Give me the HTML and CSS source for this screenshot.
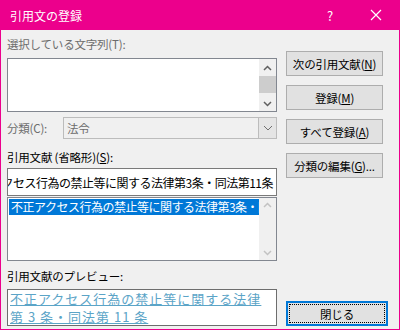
FILE: index.html
```html
<!DOCTYPE html>
<html lang="ja">
<head>
    <meta charset="UTF-8">
    <title>引用文の登録</title>
    <link rel="stylesheet" href="styles.css">
</head>
<body>
    <div class="window">
        <div class="titlebar">
            <span class="title">引用文の登録</span>
            <span class="help">?</span>
            <span class="close">
                <svg width="12" height="12" viewBox="0 0 12 12"><path d="M1 1L11 11M11 1L1 11" stroke="#fff" stroke-width="1.2"/></svg>
            </span>
        </div>

        <div class="content">
            <div class="left">
                <div class="label disabled">選択している文字列(T):</div>
                <div class="textbox">
                    <div class="text-area"></div>
                    <div class="vscroll">
                        <svg width="17" height="14" viewBox="0 0 17 14"><path d="M5 9L8.5 5.5L12 9" fill="none" stroke="#606060" stroke-width="1.5"/></svg>
                        <div class="thumb"></div>
                        <div class="spacer"></div>
                        <svg width="17" height="14" viewBox="0 0 17 14"><path d="M5 5L8.5 8.5L12 5" fill="none" stroke="#606060" stroke-width="1.5"/></svg>
                    </div>
                </div>

                <div class="combo-row">
                    <span class="label disabled">分類(C):</span>
                    <div class="combo">
                        <span class="combo-text">法令</span>
                        <span class="combo-btn">
                            <svg width="10" height="6" viewBox="0 0 10 6"><path d="M1 1L5 5L9 1" fill="none" stroke="#707070" stroke-width="1"/></svg>
                        </span>
                    </div>
                </div>

                <div class="label short-label">引用文献 (省略形)(<u>S</u>):</div>
                <div class="input">
                    <span>不正アクセス行為の禁止等に関する法律第3条・同法第11条</span>
                </div>
                <div class="listbox">
                    <div class="list-items">
                        <div class="item selected">不正アクセス行為の禁止等に関する法律第3条・同法第11条</div>
                    </div>
                    <div class="vscroll">
                        <svg width="17" height="14" viewBox="0 0 17 14"><path d="M5 9L8.5 5.5L12 9" fill="none" stroke="#c2c2c2" stroke-width="1.5"/></svg>
                        <div class="spacer"></div>
                        <svg width="17" height="14" viewBox="0 0 17 14"><path d="M5 5L8.5 8.5L12 5" fill="none" stroke="#c2c2c2" stroke-width="1.5"/></svg>
                    </div>
                </div>

                <div class="label preview-label">引用文献のプレビュー:</div>
                <div class="preview">
                    <a href="#">不正アクセス行為の禁止等に関する法律<br> 第 3 条・同法第 11 条</a>
                </div>
            </div>

            <div class="right">
                <button class="btn">次の引用文献(<u>N</u>)</button>
                <button class="btn">登録(<u>M</u>)</button>
                <button class="btn">すべて登録(<u>A</u>)</button>
                <button class="btn">分類の編集(<u>G</u>)...</button>
                <button class="btn default"><span class="focus">閉じる</span></button>
            </div>
        </div>
    </div>
</body>
</html>
```

FILE: styles.css
```css
body {
    margin: 0;
    font-family: "Noto Sans CJK JP", "Noto Sans", sans-serif;
    font-size: 11.5px;
    letter-spacing: -0.2px;
    color: #000;
}
.window {
    width: 400px;
    height: 330px;
    box-sizing: border-box;
    background-color: #f0f0f0;
    border: 1px solid #ec008c;
    border-top: none;
    display: flex;
    flex-direction: column;
}
.titlebar {
    height: 30px;
    background-color: #ec008c;
    color: #fff;
    display: flex;
    align-items: center;
    margin: 0 -1px;
    padding-left: 10px;
    flex-shrink: 0;
}
.title {
    flex: 1;
    font-size: 12px;
    letter-spacing: 0;
}
.help {
    width: 46px;
    text-align: center;
    font-size: 13px;
}
.close {
    width: 46px;
    display: flex;
    justify-content: center;
    margin-right: 1px;
}
.content {
    flex: 1;
    display: flex;
    padding: 6px 0 9px 6px;
}
.left {
    width: 270px;
    display: flex;
    flex-direction: column;
}
.label {
    height: 16px;
    line-height: 16px;
    white-space: nowrap;
}
.disabled {
    color: #6d6d6d;
}
.textbox {
    margin-top: 6px;
    height: 54px;
    box-sizing: border-box;
    border: 1px solid #828790;
    background: #fff;
    display: flex;
}
.text-area {
    flex: 1;
}
.vscroll {
    width: 17px;
    background: #f0f0f0;
    display: flex;
    flex-direction: column;
    align-items: center;
}
.textbox .vscroll svg {
    margin-top: 2px;
}
.thumb {
    width: 17px;
    height: 17px;
    background: #cdcdcd;
    margin-top: 1px;
}
.spacer {
    flex: 1;
}
.combo-row {
    margin-top: 5px;
    height: 22px;
    display: flex;
    align-items: center;
}
.combo-row .label {
    width: 56px;
}
.combo {
    flex: 1;
    height: 22px;
    box-sizing: border-box;
    border: 1px solid #bcbcbc;
    background: #f0f0f0;
    display: flex;
    align-items: center;
}
.combo-text {
    flex: 1;
    padding-left: 3px;
    color: #6d6d6d;
}
.combo-btn {
    width: 17px;
    height: 20px;
    background: #e5e5e5;
    border-left: 1px solid #bcbcbc;
    display: flex;
    align-items: center;
    justify-content: center;
}
.short-label {
    margin-top: 10px;
}
.input {
    margin-top: 3px;
    height: 28px;
    box-sizing: border-box;
    border: 1px solid #7a7a7a;
    background: #fff;
    display: flex;
    justify-content: flex-end;
    align-items: center;
    overflow: hidden;
    white-space: nowrap;
    padding-right: 3px;
    font-size: 12px;
    letter-spacing: -0.5px;
}
.input span {
    flex-shrink: 0;
}
.listbox {
    margin-top: 1px;
    height: 64px;
    box-sizing: border-box;
    border: 1px solid #828790;
    background: #fff;
    display: flex;
}
.list-items {
    flex: 1;
    overflow: hidden;
    padding: 1px 0 0 1px;
}
.item {
    white-space: nowrap;
    overflow: hidden;
    height: 16px;
    line-height: 16px;
    padding-left: 2px;
    font-size: 12px;
    letter-spacing: -0.5px;
}
.selected {
    background: #0078d7;
    color: #fff;
}
.preview-label {
    margin-top: 7px;
}
.preview {
    margin-top: 5px;
    height: 37px;
    box-sizing: border-box;
    border: 1px solid #6d6d6d;
    background: #fff;
    padding: 0 2px;
    line-height: 17px;
}
.preview a {
    color: #5ba4c7;
    font-size: 13px;
    letter-spacing: 1px;
    white-space: nowrap;
}
.right {
    width: 104px;
    padding-left: 9px;
    padding-top: 15px;
    display: flex;
    flex-direction: column;
    gap: 9px;
}
.btn {
    width: 97px;
    height: 25px;
    background: #e1e1e1;
    border: 1px solid #adadad;
    font-family: inherit;
    font-size: 11.5px;
    letter-spacing: -0.2px;
    color: #000;
    padding: 0;
    white-space: nowrap;
}
.default {
    margin-top: auto;
    width: 102px;
    border: 2px solid #0078d7;
    padding: 1px;
}
.focus {
    display: block;
    height: 100%;
    box-sizing: border-box;
    border: 1px dotted #000;
    line-height: 18px;
}
```
